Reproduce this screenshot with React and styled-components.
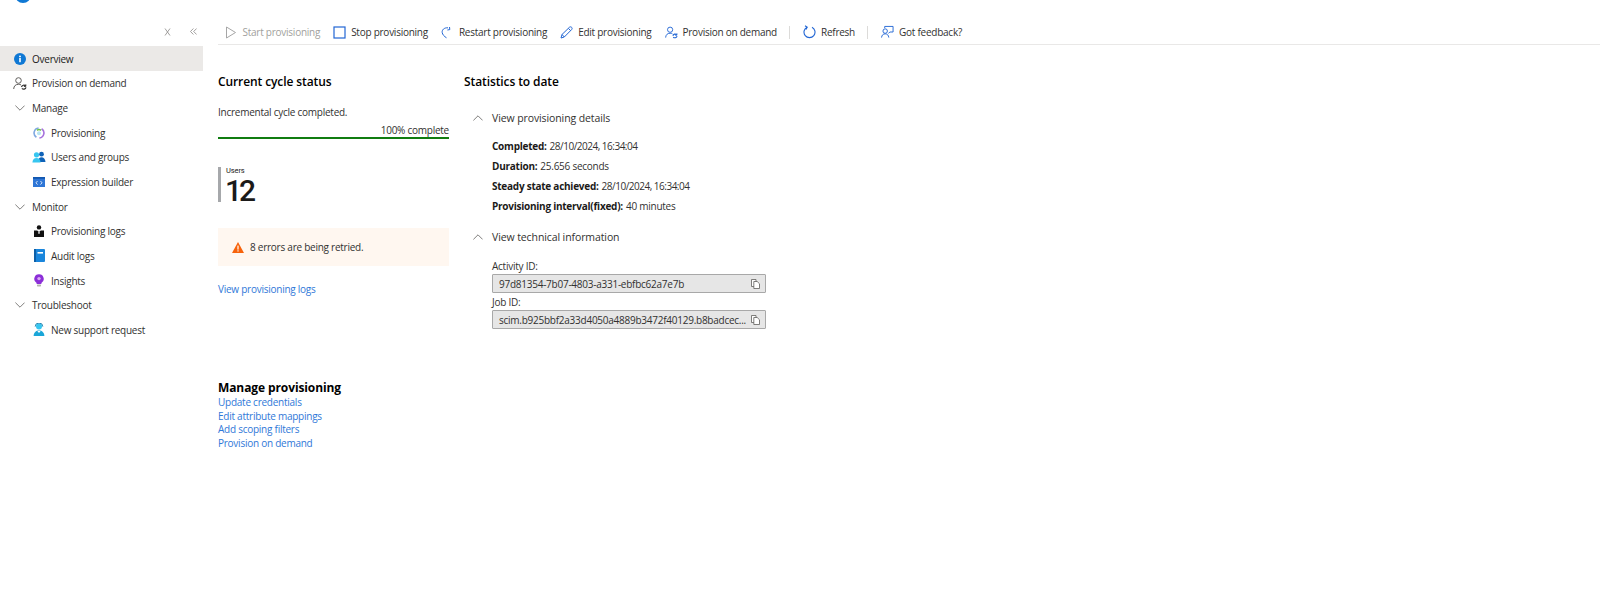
import React from 'react';
import styled, { createGlobalStyle } from 'styled-components';

const textColor = '#323130';
const headColor = '#1b1a19';
const linkColor = '#2f78d8';
const blue = '#2266d4';

const GlobalStyle = createGlobalStyle`
  html, body { margin: 0; padding: 0; background: #fff; }
  body {
    font-family: "Open Sans", "Noto Sans", "Liberation Sans", sans-serif;
    font-size: 10px;
    letter-spacing: -0.25px;
    color: ${textColor};
  }
`;

const Page = styled.div`
  display: flex;
  width: 1600px;
  height: 616px;
  overflow: hidden;
`;

const Sidebar = styled.nav`
  flex: 0 0 203px;
  display: flex;
  flex-direction: column;
`;

const LogoSliver = styled.div`
  height: 3px;
  padding-left: 15px;
  overflow: hidden;
`;

const LogoDot = styled.div`
  width: 16px;
  height: 16px;
  margin-top: -13px;
  border-radius: 50%;
  background: #0f78d4;
`;

const SideTools = styled.div`
  height: 43px;
  display: flex;
  justify-content: flex-end;
  align-items: flex-start;
  gap: 19px;
  padding: 25px 6px 0 0;
  box-sizing: border-box;
`;

const SideRow = styled.div`
  height: 24.65px;
  box-sizing: border-box;
  padding-top: 1px;
  display: flex;
  align-items: center;
  gap: 5px;
  padding-left: ${props => (props.$child ? '32px' : '13px')};
  background: ${props => (props.$active ? '#ebe9e7' : 'transparent')};
  color: ${props => (props.$active ? headColor : textColor)};
  white-space: nowrap;
`;

const IconSlot = styled.span`
  flex: 0 0 ${props => props.$size || 13}px;
  width: ${props => props.$size || 13}px;
  height: ${props => props.$size || 13}px;
  display: inline-flex;
  align-items: center;
  justify-content: center;

  svg { display: block; }
`;

const Main = styled.main`
  flex: 1;
  display: flex;
  flex-direction: column;
  min-width: 0;
`;

const Toolbar = styled.div`
  margin: 20px 0 0 15px;
  height: 24px;
  box-sizing: content-box;
  display: flex;
  align-items: center;
  padding-left: 6.5px;
  border-bottom: 1.5px solid #e9e8e7;
  white-space: nowrap;
`;

const ToolButton = styled.div`
  display: flex;
  align-items: center;
  gap: 5px;
  margin-right: 13px;
  color: ${props => (props.$disabled ? '#a19f9d' : textColor)};
`;

const ToolDivider = styled.div`
  width: 1px;
  height: 13px;
  background: #dcdbd9;
  margin: 0 13px 0 -1px;
`;

const Content = styled.div`
  padding: 28px 0 0 15px;
`;

const Columns = styled.div`
  display: flex;
  gap: 15px;
`;

const LeftColumn = styled.section`
  flex: 0 0 231px;
  display: flex;
  flex-direction: column;
`;

const RightColumn = styled.section`
  flex: 0 0 301px;
  display: flex;
  flex-direction: column;
`;

const SectionTitle = styled.h2`
  margin: 0;
  font-size: 12px;
  line-height: 17px;
  font-weight: 600;
  letter-spacing: -0.1px;
  color: #000;
`;

const CycleText = styled.div`
  margin-top: 15px;
  line-height: 14px;
`;

const ProgressLabel = styled.div`
  margin-top: 4px;
  text-align: right;
  line-height: 14px;
`;

const ProgressBar = styled.div`
  height: 2px;
  background: #107c10;
`;

const Kpi = styled.div`
  margin-top: 28px;
  height: 35px;
  padding-left: 5px;
  border-left: 3px solid #a6a8ab;
`;

const KpiLabel = styled.div`
  font-family: Roboto, "Open Sans", sans-serif;
  font-size: 7.5px;
  line-height: 8px;
  letter-spacing: -0.1px;
  color: ${headColor};
`;

const KpiValue = styled.div`
  font-family: Roboto, "Open Sans", sans-serif;
  font-size: 30px;
  font-weight: 500;
  line-height: 27px;
  margin: 2px 0 0 -1px;
  letter-spacing: -3px;
  color: ${headColor};
`;

const WarningBox = styled.div`
  margin-top: 26px;
  height: 38px;
  display: flex;
  align-items: center;
  gap: 6px;
  padding-left: 13px;
  background: #fff7f0;
`;

const LinkText = styled.a`
  display: block;
  color: ${linkColor};
  text-decoration: none;
  line-height: ${props => props.$line || 14}px;
`;

const LogsLink = styled(LinkText)`
  margin-top: 16px;
`;

const Expander = styled.div`
  display: flex;
  align-items: center;
  gap: 9px;
  height: 16px;
  margin-left: 9px;
  font-size: 10.5px;
  letter-spacing: -0.1px;
  margin-top: ${props => props.$top}px;
`;

const Details = styled.div`
  margin: 13px 0 0 28px;
  display: flex;
  flex-direction: column;
  gap: 6px;
`;

const DetailRow = styled.div`
  line-height: 14px;
  white-space: nowrap;

  b { font-weight: 700; color: ${headColor}; }
`;

const DetailValue = styled.span`
  margin-left: 3px;
  letter-spacing: ${props => (props.$tight ? '-0.5px' : 'inherit')};
`;

const Fields = styled.div`
  margin: 14px 0 0 28px;
`;

const FieldLabel = styled.div`
  line-height: 14px;
  margin-top: ${props => props.$top || 0}px;
`;

const FieldBox = styled.div`
  width: 274px;
  height: 19px;
  margin-top: 1px;
  box-sizing: border-box;
  display: flex;
  align-items: center;
  justify-content: space-between;
  padding: 0 5px 0 6px;
  background: #e6e6e6;
  border: 1px solid #a8a8a8;
  border-radius: 1px;
  white-space: nowrap;
`;

const ManageBlock = styled.section`
  margin-top: 51px;
`;

const ManageTitle = styled(SectionTitle)`
  line-height: 15px;
  margin-bottom: 1px;
  font-weight: 700;
`;

const CloseIcon = () => (
  <svg width="7" height="8" viewBox="0 0 7 8" fill="none" stroke="#8a8886" strokeWidth=".8">
    <path d="M1 .5 L6 7.5 M6 .5 L1 7.5" />
  </svg>
);

const CollapseIcon = () => (
  <svg width="7" height="7" viewBox="0 0 7 7" fill="none" stroke="#8a8886" strokeWidth=".8">
    <path d="M3.4 .5 L.5 3.5 L3.4 6.5 M6.6 .5 L3.7 3.5 L6.6 6.5" />
  </svg>
);

const PlayIcon = () => (
  <svg width="12" height="13" viewBox="0 0 12 13" fill="none" stroke="#a6a6a6" strokeWidth="1">
    <path d="M1.5 1 L10.5 6.5 L1.5 12 Z" />
  </svg>
);

const StopIcon = () => (
  <svg width="13" height="13" viewBox="0 0 13 13" fill="none" stroke={blue} strokeWidth="1.2">
    <rect x="1" y="1" width="11" height="11" />
  </svg>
);

const RestartIcon = () => (
  <svg width="12" height="13" viewBox="0 0 12 13" fill="none" stroke={blue} strokeWidth="1">
    <path d="M7 1.8 C3 1.5 .8 4 1.2 6.5 C1.5 8.6 3.2 10.4 5.5 11.8" />
    <path d="M8.5 1 L8.8 3.6 L6.4 4" />
  </svg>
);

const PencilIcon = () => (
  <svg width="13" height="13" viewBox="0 0 13 13" fill="none" stroke={blue} strokeWidth="1">
    <path d="M1 12 L2 8.5 L9.5 1.2 C10.2 .6 11.2 .8 11.8 1.5 C12.3 2.2 12.2 3 11.6 3.6 L4.3 11 Z" />
    <path d="M2 8.5 L4.3 11 M8.4 2.4 L10.6 4.6" />
  </svg>
);

const PersonSync = ({ color = blue, accent = blue }) => (
  <svg width="14" height="13" viewBox="0 0 14 13" fill="none" stroke={color} strokeWidth="1">
    <circle cx="5.5" cy="3.5" r="2.8" />
    <path d="M.7 12 C.8 9 2.6 7.3 5.5 7.3 C6.5 7.3 7.3 7.5 8 7.9" />
    <path d="M8.5 10 A2.4 2.4 0 0 1 12.6 9 M13 10.3 A2.4 2.4 0 0 1 8.9 11.4" stroke={accent} strokeWidth="1.2" />
    <path d="M12.8 7.4 V9.4 H10.9" stroke={accent} />
  </svg>
);

const RefreshIcon = () => (
  <svg width="13" height="14" viewBox="0 0 13 14" fill="none" stroke={blue} strokeWidth="1.1">
    <path d="M4 2.2 A5.5 5.5 0 1 0 9 2.2" />
    <path d="M2 .8 L4.2 2.2 L3 4.4" />
  </svg>
);

const FeedbackIcon = () => (
  <svg width="13" height="14" viewBox="0 0 14 14" fill="none" stroke={blue} strokeWidth="1">
    <path d="M4 2.8 V1 H13 V7 H9.5 L8 8.6" />
    <circle cx="4.5" cy="6" r="2.4" />
    <path d="M.6 13 C.8 10.4 2.3 9 4.5 9 C6.7 9 8.2 10.4 8.4 13" />
  </svg>
);

const InfoIcon = () => (
  <svg width="12" height="12" viewBox="0 0 12 12">
    <circle cx="6" cy="6" r="6" fill="#0f78d4" />
    <rect x="5.2" y="5" width="1.6" height="4.2" fill="#fff" />
    <circle cx="6" cy="3.4" r=".95" fill="#fff" />
  </svg>
);

const ChevronDown = () => (
  <svg width="10" height="6" viewBox="0 0 10 6" fill="none" stroke="#605e5c" strokeWidth=".8">
    <path d="M.4 .6 L5 5.2 L9.6 .6" />
  </svg>
);

const ChevronUp = () => (
  <svg width="10" height="6" viewBox="0 0 10 6" fill="none" stroke="#605e5c" strokeWidth=".8">
    <path d="M.4 5.4 L5 .8 L9.6 5.4" />
  </svg>
);

const ProvisioningIcon = () => (
  <svg width="12" height="12" viewBox="0 0 12 12" fill="none" strokeWidth="1.6">
    <path d="M5.6 1 A5 5 0 0 0 3.4 10.2" stroke="#7fa8e0" />
    <path d="M6.4 11 A5 5 0 0 0 8.6 1.8" stroke="#a672dc" />
    <path d="M4 3.4 A3 3 0 0 1 8 3.4" stroke="#6fc04a" />
    <circle cx="6" cy="6.2" r="2" fill="#b8e4f4" stroke="none" />
  </svg>
);

const GroupIcon = () => (
  <svg width="14" height="12" viewBox="0 0 14 12">
    <circle cx="9.5" cy="3.2" r="2.4" fill="#0f62b8" />
    <path d="M5.8 11 C6 7.8 7.6 6.2 9.5 6.2 C11.6 6.2 13.3 7.8 13.5 11 Z" fill="#0f62b8" />
    <circle cx="4.5" cy="3.8" r="2.6" fill="#37c6f0" />
    <path d="M.4 11.5 C.6 8.4 2.3 7 4.5 7 C6.7 7 8.4 8.4 8.6 11.5 Z" fill="#37c6f0" />
  </svg>
);

const ExpressionIcon = () => (
  <svg width="12" height="10" viewBox="0 0 12 10">
    <rect width="12" height="10" fill="#2e76d6" />
    <rect width="12" height="1.8" fill="#1257b0" />
    <path d="M4.5 4 L3 5.8 L4.5 7.6 M7.5 4 L9 5.8 L7.5 7.6" fill="none" stroke="#fff" strokeWidth=".8" />
  </svg>
);

const LogsIcon = () => (
  <svg width="10" height="12" viewBox="0 0 10 12">
    <circle cx="5" cy="2.4" r="2.2" fill="#111" />
    <path d="M0 5.4 H3.2 L5 7 L6.8 5.4 H10 V12 H0 Z" fill="#111" />
    <rect x="4.2" y="7.2" width="1.6" height="1.4" fill="#fff" />
  </svg>
);

const AuditIcon = () => (
  <svg width="11" height="13" viewBox="0 0 11 13">
    <rect width="11" height="13" rx="1" fill="#1a86dc" />
    <rect width="2" height="13" fill="#0d5fa8" />
    <rect x="3.5" y="3" width="5.5" height="1.6" fill="#fff" />
  </svg>
);

const InsightsIcon = () => (
  <svg width="10" height="13" viewBox="0 0 10 13">
    <path d="M5 .3 A4.6 4.6 0 0 1 7.4 8.9 V10 H2.6 V8.9 A4.6 4.6 0 0 1 5 .3 Z" fill="#8c2fd8" />
    <circle cx="5" cy="4.6" r="1.7" fill="#d9a9f5" />
    <rect x="3" y="10.6" width="4" height="1.8" rx=".6" fill="#b5b3b1" />
  </svg>
);

const SupportIcon = () => (
  <svg width="12" height="13" viewBox="0 0 12 13">
    <circle cx="6" cy="3.6" r="3" fill="#37c6f0" />
    <path d="M2.2 3.6 A3.8 3.6 0 0 1 9.8 3.6" fill="none" stroke="#0f78a8" strokeWidth=".9" />
    <path d="M.6 13 C.8 9.2 3 7.4 6 7.4 C9 7.4 11.2 9.2 11.4 13 Z" fill="#1aa6d8" />
    <path d="M4.4 8 L6 10 L7.6 8 Z" fill="#fff" />
  </svg>
);

const WarningIcon = () => (
  <svg width="12" height="11" viewBox="0 0 12 11">
    <path d="M6 0 L12 11 H0 Z" fill="#f7630c" />
    <rect x="5.4" y="3.6" width="1.2" height="4" fill="#fff" />
    <rect x="5.4" y="8.3" width="1.2" height="1.2" fill="#fff" />
  </svg>
);

const CopyIcon = () => (
  <svg width="9" height="10" viewBox="0 0 9 10" fill="#fff" stroke="#605e5c" strokeWidth=".8">
    <path d="M.5 .5 H5 V7.5 H.5 Z" />
    <path d="M2.8 2.5 H6.2 L8.5 4.8 V9.5 H2.8 Z" />
  </svg>
);

const navItems = [
  { label: 'Overview', icon: <InfoIcon />, active: true },
  { label: 'Provision on demand', icon: <PersonSync color="#605e5c" accent="#323130" /> },
  { label: 'Manage', icon: <ChevronDown /> },
  { label: 'Provisioning', icon: <ProvisioningIcon />, child: true },
  { label: 'Users and groups', icon: <GroupIcon />, child: true },
  { label: 'Expression builder', icon: <ExpressionIcon />, child: true },
  { label: 'Monitor', icon: <ChevronDown /> },
  { label: 'Provisioning logs', icon: <LogsIcon />, child: true },
  { label: 'Audit logs', icon: <AuditIcon />, child: true },
  { label: 'Insights', icon: <InsightsIcon />, child: true },
  { label: 'Troubleshoot', icon: <ChevronDown /> },
  { label: 'New support request', icon: <SupportIcon />, child: true },
];

const details = [
  { label: 'Completed:', value: '28/10/2024, 16:34:04', tight: true },
  { label: 'Duration:', value: '25.656 seconds' },
  { label: 'Steady state achieved:', value: '28/10/2024, 16:34:04', tight: true },
  { label: 'Provisioning interval(fixed):', value: '40 minutes' },
];

const manageLinks = ['Update credentials', 'Edit attribute mappings', 'Add scoping filters', 'Provision on demand'];

export default function App() {
  return (
    <Page>
      <GlobalStyle />
      <Sidebar>
        <LogoSliver><LogoDot /></LogoSliver>
        <SideTools>
          <CloseIcon />
          <CollapseIcon />
        </SideTools>
        {navItems.map(item => (
          <SideRow key={item.label} $child={item.child} $active={item.active}>
            <IconSlot $size={14}>{item.icon}</IconSlot>
            {item.label}
          </SideRow>
        ))}
      </Sidebar>
      <Main>
        <Toolbar>
          <ToolButton $disabled><IconSlot><PlayIcon /></IconSlot>Start provisioning</ToolButton>
          <ToolButton><IconSlot><StopIcon /></IconSlot>Stop provisioning</ToolButton>
          <ToolButton><IconSlot><RestartIcon /></IconSlot>Restart provisioning</ToolButton>
          <ToolButton><IconSlot><PencilIcon /></IconSlot>Edit provisioning</ToolButton>
          <ToolButton><IconSlot><PersonSync /></IconSlot>Provision on demand</ToolButton>
          <ToolDivider />
          <ToolButton><IconSlot><RefreshIcon /></IconSlot>Refresh</ToolButton>
          <ToolDivider />
          <ToolButton><IconSlot><FeedbackIcon /></IconSlot>Got feedback?</ToolButton>
        </Toolbar>
        <Content>
          <Columns>
            <LeftColumn>
              <SectionTitle>Current cycle status</SectionTitle>
              <CycleText>Incremental cycle completed.</CycleText>
              <ProgressLabel>100% complete</ProgressLabel>
              <ProgressBar />
              <Kpi>
                <KpiLabel>Users</KpiLabel>
                <KpiValue>12</KpiValue>
              </Kpi>
              <WarningBox>
                <IconSlot><WarningIcon /></IconSlot>
                8 errors are being retried.
              </WarningBox>
              <LogsLink href="#">View provisioning logs</LogsLink>
            </LeftColumn>
            <RightColumn>
              <SectionTitle>Statistics to date</SectionTitle>
              <Expander $top={20}><ChevronUp />View provisioning details</Expander>
              <Details>
                {details.map(item => (
                  <DetailRow key={item.label}>
                    <b>{item.label}</b><DetailValue $tight={item.tight}>{item.value}</DetailValue>
                  </DetailRow>
                ))}
              </Details>
              <Expander $top={16}><ChevronUp />View technical information</Expander>
              <Fields>
                <FieldLabel>Activity ID:</FieldLabel>
                <FieldBox>97d81354-7b07-4803-a331-ebfbc62a7e7b<CopyIcon /></FieldBox>
                <FieldLabel $top={2}>Job ID:</FieldLabel>
                <FieldBox>scim.b925bbf2a33d4050a4889b3472f40129.b8badcec...<CopyIcon /></FieldBox>
              </Fields>
            </RightColumn>
          </Columns>
          <ManageBlock>
            <ManageTitle>Manage provisioning</ManageTitle>
            {manageLinks.map(label => (
              <LinkText key={label} href="#" $line={13.7}>{label}</LinkText>
            ))}
          </ManageBlock>
        </Content>
      </Main>
    </Page>
  );
}
